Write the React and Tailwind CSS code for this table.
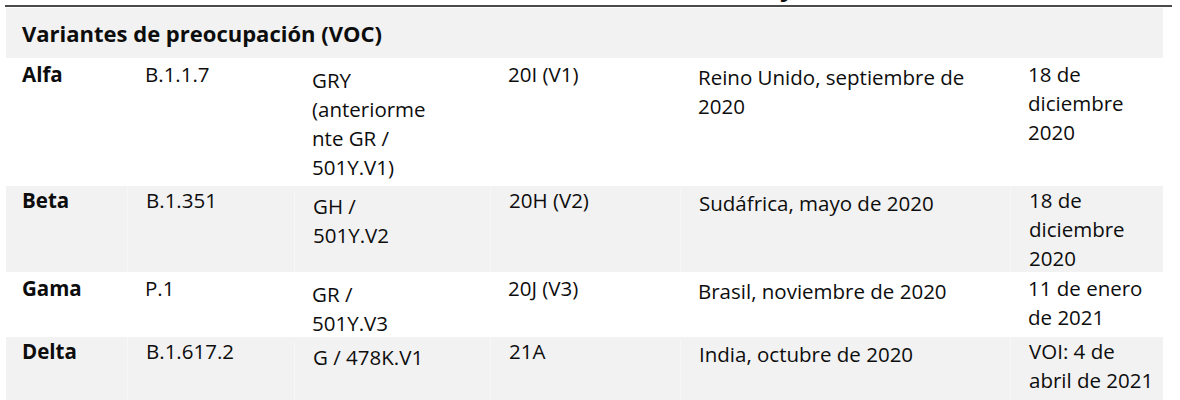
const cols = "grid grid-cols-[121px_167px_196px_190px_330px_153px]";

const rows = [
  {
    h: "h-[128px]",
    bg: "bg-white",
    pt: "pt-[2px]",
    cells: [
      ["Alfa"],
      ["B.1.1.7"],
      ["GRY", "(anteriorme", "nte GR /", "501Y.V1)"],
      ["20I (V1)"],
      ["Reino Unido, septiembre de", "2020"],
      ["18 de", "diciembre", "2020"],
    ],
  },
  {
    h: "h-[86px]",
    bg: "bg-[#f2f2f2]",
    pt: "pt-0",
    cells: [
      ["Beta"],
      ["B.1.351"],
      ["GH /", "501Y.V2"],
      ["20H (V2)"],
      ["Sudáfrica, mayo de 2020"],
      ["18 de", "diciembre", "2020"],
    ],
  },
  {
    h: "h-[65px]",
    bg: "bg-white",
    pt: "pt-[2px]",
    cells: [
      ["Gama"],
      ["P.1"],
      ["GR /", "501Y.V3"],
      ["20J (V3)"],
      ["Brasil, noviembre de 2020"],
      ["11 de enero", "de 2021"],
    ],
  },
  {
    h: "h-[90px]",
    bg: "bg-[#f2f2f2]",
    pt: "pt-0",
    cells: [
      ["Delta"],
      ["B.1.617.2"],
      ["G / 478K.V1"],
      ["21A"],
      ["India, octubre de 2020"],
      ["VOI: 4 de", "abril de 2021"],
    ],
  },
];

// per-column tweaks: first column is bold, col 3 and 5 sit a bit lower
const colStyle = [
  "pl-[16px] font-bold",
  "pl-[18px]",
  "pl-[18px] mt-[6px]",
  "pl-[18px]",
  "pl-[18px] mt-[3px]",
  "pl-[18px]",
];

function Row({ row }) {
  return (
    <div className={`${cols} ${row.h} ${row.bg} ${row.pt}`}>
      {row.cells.map((lines, i) => (
        <div
          key={i}
          className={`${colStyle[i]} ${i > 0 && row.bg !== "bg-white" ? "border-l border-[#f7f7f7]" : ""}`}
        >
          {lines.map((l, j) => (
            <div key={j} className="whitespace-nowrap">
              {l}
            </div>
          ))}
        </div>
      ))}
    </div>
  );
}

export default function App() {
  return (
    <div
      className="w-[1180px] h-[400px] overflow-hidden bg-white text-[#0d0d0d] text-[20.5px] leading-[29px]"
      style={{ fontFamily: '"Open Sans", "Noto Sans", sans-serif' }}
    >
      {/* tail of the caption above the table */}
      <div className="h-[5px] overflow-hidden pl-[780px]">
        <div className="-mt-[29px] text-[26px] leading-[30px] font-bold">y</div>
      </div>

      <div className="ml-[5px] w-[1167px] h-[2px] bg-[#4a4a4a]" />

      <div className="ml-[6px] w-[1157px] mt-[1px]">
        <div className="h-[50px] bg-[#f2f2f2] pl-[16px] flex items-center font-bold text-[22px]">
          Variantes de preocupación (VOC)
        </div>
        {rows.map((r, i) => (
          <Row key={i} row={r} />
        ))}
      </div>
    </div>
  );
}
